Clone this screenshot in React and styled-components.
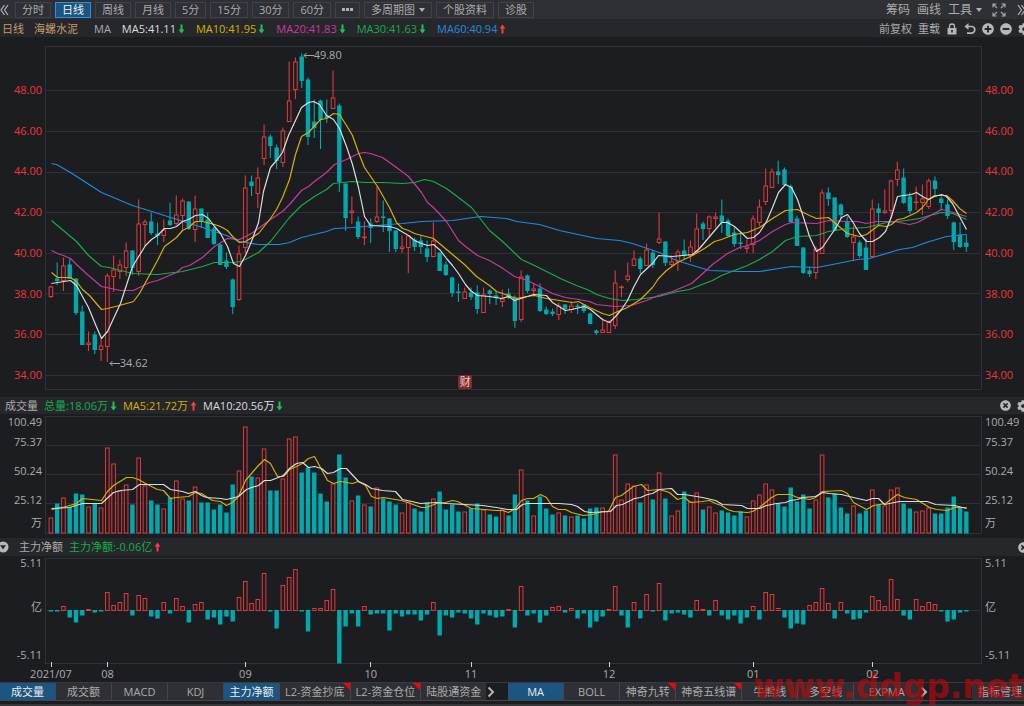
import React, { useState } from 'react';
import styled, { createGlobalStyle } from 'styled-components';
import { FaCog, FaMinusCircle, FaPlusCircle, FaTimesCircle } from 'react-icons/fa';

const UP = '#e03a3a';
const DOWN = '#00a9ae';
const WHITE = '#dcdcdc';
const YELLOW = '#d9b000';
const MAGENTA = '#cc389f';
const GREEN = '#17ad4c';
const BLUE = '#208ae0';

const CHART_WIDTH = 937;
const STEP = 6.27;
const barX = (i) => 6.4 + i * STEP;

// direction, high, body top, body bottom, low
const CANDLES = `
U 240 241 251 252|D 217 233 235 239|U 212 220 235 245|D 213 219 233 233|D 233 233 267 269|D 260 266 299 299
U 286 297 299 305|D 286 289 304 308|U 293 300 304 315|U 228 230 301 316|U 210 224 231 246|U 214 219 226 233
U 197 205 222 230|D 205 205 222 229|U 154 178 226 230|U 174 176 179 200|D 167 176 187 189|D 177 188 190 199
U 174 184 190 196|D 157 175 179 180|U 150 169 178 179|U 153 155 170 184|D 156 156 183 184|U 150 163 184 196
D 163 163 175 182|D 167 174 192 192|D 181 183 198 199|D 198 199 219 219|D 207 215 221 223|D 233 234 261 268
U 200 208 254 255|U 130 142 202 207|D 130 136 140 150|U 122 132 148 162|U 79 91 113 119|D 89 91 100 112
D 99 102 115 123|U 82 85 117 121|U 16 55 76 76|U 12 16 44 53|D 8 11 35 42|D 32 34 91 99
D 54 76 82 92|D 54 55 74 103|D 54 70 72 77|U 25 52 63 63|D 58 60 136 146|D 138 138 172 185
U 151 165 167 178|D 171 176 191 193|U 176 191 192 199|D 173 178 182 197|U 141 171 176 177|D 155 171 172 186
D 173 173 185 206|D 185 185 203 206|U 190 201 203 207|U 190 190 202 227|D 192 194 201 205|D 190 195 201 208
D 195 203 211 216|U 177 195 211 211|D 207 207 225 225|D 216 219 229 230|D 231 232 247 251|D 238 246 247 256
U 242 246 253 253|D 242 247 251 254|D 240 247 263 268|U 242 249 267 267|D 244 245 248 258|D 246 250 252 259
U 244 253 256 261|D 243 248 252 253|D 250 252 275 282|U 225 231 274 276|D 229 230 245 247|U 238 243 245 250
D 238 243 265 266|D 261 264 268 269|D 263 266 268 270|U 257 260 269 274|D 259 259 263 268|U 256 260 264 267
D 258 260 261 268|D 259 259 265 267|D 267 268 278 278|D 284 285 287 289|U 273 284 287 287|U 275 276 287 287
U 225 237 280 283|U 240 241 242 251|U 217 230 234 236|U 205 213 220 220|D 211 213 223 227|U 198 204 220 220
D 205 207 219 222|U 167 193 197 198|D 196 196 217 220|U 210 216 219 221|U 204 206 216 225|D 194 205 210 213
U 195 201 210 216|U 168 183 206 207|D 176 178 183 194|U 170 171 183 192|U 167 171 173 181|D 154 170 176 187
D 173 175 190 191|D 182 187 198 201|D 188 197 198 203|U 194 201 203 207|U 170 173 199 207|U 154 161 177 180
U 123 140 156 159|U 123 126 142 142|D 115 126 129 138|D 122 124 139 140|D 139 141 176 177|D 170 173 200 200
D 202 202 227 228|D 221 225 228 231|U 201 203 227 233|U 144 147 208 208|D 142 147 153 160|D 152 152 184 185
D 158 159 169 173|D 171 176 191 192|U 180 191 197 215|D 195 197 210 212|D 193 202 224 224|U 154 163 211 211
D 158 163 167 180|U 144 165 167 168|U 134 135 165 173|U 116 124 134 140|D 123 132 157 158|D 147 151 165 168
U 141 156 157 164|U 139 153 157 169|U 133 135 161 163|D 131 135 143 149|D 151 153 157 164|D 154 159 170 173
D 176 177 196 204|D 177 189 201 202|D 189 197 201 206
`.trim().split(/[|\n]/).map((row) => {
    const [dir, high, top, bottom, low] = row.split(' ');
    return { up: dir === 'U', high: +high, top: +top, bottom: +bottom, low: +low };
});

const VOLUMES = [
    16, 30, 36, 26, 40, 39, 27, 30, 26, 86, 70, 43, 49, 29, 76, 48, 33, 29, 25, 36,
    53, 35, 33, 47, 31, 31, 24, 29, 21, 49, 63, 107, 57, 56, 85, 43, 43, 55, 95, 97,
    61, 66, 61, 40, 32, 50, 79, 56, 33, 38, 29, 27, 46, 35, 32, 29, 21, 32, 25, 22,
    31, 35, 42, 24, 29, 22, 22, 25, 30, 24, 19, 17, 24, 18, 39, 64, 33, 18, 37, 25,
    19, 21, 18, 17, 18, 15, 25, 26, 26, 23, 79, 34, 50, 48, 31, 49, 34, 61, 35, 18,
    23, 42, 32, 41, 24, 27, 21, 23, 21, 18, 22, 17, 33, 39, 50, 44, 30, 27, 46, 32,
    39, 25, 34, 79, 36, 40, 26, 20, 28, 20, 23, 44, 29, 28, 44, 46, 30, 25, 22, 23,
    26, 20, 20, 26, 37, 26, 22
];

const NET_FLOW = [
    -1, -1, 4, -7, -12, -5, 1, -2, -1, 18, 5, 8, 17, -5, 15, 12, -6, -8, 8, -3,
    12, 4, -12, 6, 8, -9, -7, -14, -6, -11, 13, 29, 7, 11, 37, -1, -18, 25, 33, 41,
    -1, -21, 2, 2, 10, 21, -53, -16, -3, -16, 4, -4, -3, -3, -20, -3, -6, -4, -4, -10,
    -4, 8, -25, -5, -7, -2, -3, -8, -14, -3, -5, -7, -6, 1, -17, 24, -5, -3, -12, -5,
    3, 4, -2, 2, -8, -3, -17, -11, -6, 1, 24, -5, -17, 8, -8, 16, -1, 27, -10, -3,
    -2, -4, -7, 10, 1, -5, 10, -5, -9, -5, -13, -7, 4, -9, 18, 16, 2, -7, -18, -13,
    -14, 5, 8, 22, 7, -8, 8, -3, -9, -8, -2, 14, 10, 4, 31, 11, -5, -9, 11, 4,
    8, 6, -1, -11, -9, -2, -1
];

const PRICE_LINES = [
    { color: BLUE, points: '7,118 12,119 26,127 57,147 88,160 120,170 155,181 182,190 195,196 214,199 235,199 245,197 257,192 282,186 290,183 308,182 345,179 358,178 377,176 408,175 415,174 436,171 462,173 472,176 495,179 515,185 552,193 575,195 588,198 615,207 632,215 655,222 665,225 695,226 715,226 747,221 772,222 788,219 813,214 825,213 855,204 868,202 885,196 902,191 922,189' },
    { color: GREEN, points: '7,175 32,196 44,210 57,221 65,222 76,225 89,228 113,229 138,226 158,221 170,217 189,217 197,216 214,207 226,196 245,172 257,160 270,151 282,144 289,138 308,136 320,137 338,137 358,138 370,137 380,134 389,136 402,143 414,152 427,162 445,185 457,195 477,214 490,220 502,226 518,234 532,240 545,245 552,249 565,253 578,255 592,254 614,251 633,246 645,244 655,240 668,235 677,230 690,225 703,220 715,214 728,206 741,195 753,191 772,190 784,186 803,183 822,182 842,177 862,175 875,173 885,170 897,167 908,168 922,174' },
    { color: MAGENTA, points: '7,205 13,208 19,210 26,213 32,219 44,230 57,241 76,245 89,245 95,242 105,237 113,235 132,227 138,222 145,220 158,212 170,201 183,193 195,194 207,188 218,180 226,174 238,166 245,159 257,145 264,141 270,136 282,127 290,119 302,114 308,111 314,108 320,107 326,108 338,112 352,122 364,131 377,147 383,157 389,162 402,176 414,195 421,201 433,210 445,215 457,222 470,231 483,235 495,241 508,248 521,252 534,254 545,256 552,259 571,261 587,260 602,255 614,250 628,246 647,238 655,231 668,219 683,208 695,202 703,200 715,195 728,186 741,179 747,177 772,178 784,175 803,176 813,176 822,178 832,176 850,176 865,179 873,177 884,171 897,164 902,165 922,171' },
    { color: YELLOW, points: '7,227 13,232 26,232 32,236 38,244 45,250 57,264 63,263 75,260 89,256 95,248 101,237 113,215 120,201 132,192 138,185 144,182 151,176 158,176 170,179 176,181 183,185 189,192 195,197 201,196 214,188 226,173 232,164 238,152 245,134 251,109 257,91 264,87 276,74 282,73 289,68 295,69 302,80 308,90 314,107 320,122 333,141 345,162 352,177 358,183 364,185 370,188 389,193 408,209 420,219 432,231 445,240 452,246 464,250 472,253 482,251 490,250 502,253 515,255 528,257 534,256 545,262 558,268 565,270 571,267 583,262 596,254 608,242 614,233 622,225 633,217 648,210 660,203 670,196 677,194 690,189 703,187 715,182 728,173 741,165 753,164 765,170 772,173 784,172 791,178 803,188 815,191 822,189 834,180 842,181 847,179 853,174 859,173 872,167 878,162 884,154 890,150 902,150 908,155 915,163 922,168' },
    { color: WHITE, points: '7,238 13,237 26,235 32,240 44,262 51,279 57,293 63,286 76,258 88,221 101,200 107,194 113,190 120,183 126,183 132,181 138,176 144,174 151,170 158,169 164,173 170,181 176,188 183,201 189,218 195,221 201,210 207,196 214,177 219,146 226,122 232,115 238,107 244,90 257,62 264,57 269,56 275,59 282,70 289,74 295,83 302,101 308,119 314,142 320,171 326,180 345,181 352,183 364,190 370,195 377,198 383,200 389,199 396,205 402,213 408,220 414,228 421,239 426,245 433,250 445,251 457,253 464,251 470,255 483,251 489,249 502,250 508,257 521,265 527,264 540,261 546,264 558,274 565,277 571,271 577,264 583,255 589,242 596,229 608,218 614,210 628,211 648,209 655,203 677,177 683,177 690,181 703,193 709,192 715,187 722,176 728,162 734,147 741,139 747,142 753,154 759,172 765,191 772,206 778,202 784,193 791,183 797,172 803,169 808,176 815,188 822,196 828,196 835,192 841,186 847,171 853,151 859,150 867,149 872,147 878,151 884,154 890,151 897,149 902,151 908,158 915,171 922,184' }
];

const VOLUME_LINES = [
    { color: YELLOW, points: '7,94 18,92 32,88 38,83 57,85 63,76 69,70 82,62 88,62 94,64 101,68 107,71 113,74 119,75 126,83 132,82 144,81 151,77 157,78 168,85 176,86 182,90 188,87 194,81 201,65 213,51 220,44 226,48 233,61 239,61 245,54 252,51 258,48 264,43 270,41 283,65 289,68 296,66 308,68 314,66 321,70 327,81 333,83 339,82 357,85 363,87 377,92 382,92 392,88 401,87 408,85 413,86 427,93 452,95 458,95 464,97 471,93 477,85 483,83 489,83 496,79 502,82 508,91 514,94 521,94 527,97 539,100 548,99 558,96 564,96 571,82 577,80 589,71 597,69 603,75 615,74 625,77 633,84 640,82 646,87 658,86 665,85 671,88 677,90 683,94 689,96 703,97 708,96 715,92 727,82 733,79 746,79 753,82 765,84 771,82 778,76 797,75 803,78 809,87 822,94 829,90 841,88 853,79 860,82 872,84 885,92 892,94 903,95 910,92 922,92' },
    { color: WHITE, points: '7,93 25,92 38,88 57,88 69,77 76,75 88,74 95,69 102,69 119,69 126,74 138,76 144,78 151,76 157,80 162,82 176,83 182,84 194,81 202,74 207,72 214,70 220,65 226,65 239,60 245,53 252,48 258,47 264,52 270,51 277,53 283,58 289,57 296,53 302,53 314,66 321,69 327,73 338,75 351,76 358,84 363,85 376,88 392,87 402,88 438,90 452,92 463,94 472,94 478,89 483,88 515,88 527,89 533,91 540,96 546,97 566,96 572,90 578,89 590,83 596,82 603,79 608,78 615,74 627,73 633,79 640,79 646,80 658,82 671,85 678,89 697,90 703,93 715,93 722,90 732,88 741,87 746,85 753,84 758,82 771,81 778,77 785,78 797,79 809,82 822,85 828,83 834,83 840,89 855,86 883,86 891,89 910,90 922,93' }
];

const PERIODS = ['分时', '日线', '周线', '月线', '5分', '15分', '30分', '60分'];
const PRICES = ['48.00', '46.00', '44.00', '42.00', '40.00', '38.00', '36.00', '34.00'];
const VOLUME_TICKS = ['100.49', '75.37', '50.24', '25.12', '万'];
const FLOW_TICKS = ['5.11', '亿', '-5.11'];

const AVERAGES = [
    { text: 'MA5:41.11', color: WHITE },
    { text: 'MA10:41.95', color: YELLOW },
    { text: 'MA20:41.83', color: MAGENTA },
    { text: 'MA30:41.63', color: GREEN },
    { text: 'MA60:40.94', color: BLUE, up: true }
];

// days = trading days until the next month label
const MONTHS = [
    { label: '2021/07', days: 9 },
    { label: '08', days: 22 },
    { label: '09', days: 20 },
    { label: '10', days: 16 },
    { label: '11', days: 22 },
    { label: '12', days: 23 },
    { label: '01', days: 19 },
    { label: '02', days: 17 }
];

const SUB_TABS = [
    { label: '成交量', active: true },
    { label: '成交额' },
    { label: 'MACD' },
    { label: 'KDJ' },
    { label: '主力净额', active: true },
    { label: 'L2-资金抄底', flag: true },
    { label: 'L2-资金仓位', flag: true },
    { label: '陆股通资金' }
];

const MAIN_TABS = [
    { label: 'MA', active: true },
    { label: 'BOLL' },
    { label: '神奇九转', flag: true },
    { label: '神奇五线谱', flag: true },
    { label: '牛熊线' },
    { label: '多空线' },
    { label: 'EXPMA', wide: true }
];

const TrendArrow = ({ up }) => (
    <svg width="7" height="10" viewBox="0 0 7 10" fill={up ? '#ff3b3b' : '#19c653'}>
        <path d={up ? 'M3.5 0.5 6.5 4.5H4.5V9.5H2.5V4.5H0.5z' : 'M3.5 9.5 0.5 5.5h2v-5h2v5h2z'} />
    </svg>
);

const Chevron = ({ left, double }) => (
    <svg width="10" height="12" viewBox="0 0 10 12" fill="none" stroke="#b4b4b4" strokeWidth={double ? 1.2 : 2}>
        {double && <path d={left ? 'M4.5 1 1 6l3.5 5M8 1 4.5 6 8 11' : 'M2 1l3.5 5L2 11M5.5 1 9 6l-3.5 5'} />}
        {!double && <path d="M2.5 1.5 7 6l-4.5 4.5" />}
    </svg>
);

const LockIcon = () => (
    <svg width="12" height="12" viewBox="0 0 12 12">
        <path d="M3.5 6V3.500a2.500 2.500 0 0 1 5 0V5" fill="none" stroke="#b4b4b4" strokeWidth="1.300" />
        <path fillRule="evenodd" fill="#b4b4b4" d="M1.500 5h9v6.500h-9zM5.200 7v2.500h1.600V7z" />
    </svg>
);

const UndoIcon = () => (
    <svg width="12" height="12" viewBox="0 0 12 12">
        <path d="M3 3.500h4.500a3.300 3.300 0 0 1 0 6.600H3" fill="none" stroke="#b4b4b4" strokeWidth="1.700" />
        <path d="M4.500 0v7L0.500 3.500z" fill="#b4b4b4" />
    </svg>
);

const ExpandIcon = () => (
    <svg width="14" height="14" viewBox="0 0 14 14" fill="none" stroke="#a8a8a8" strokeWidth="1.100">
        <path d="M1 4.500V1h3.500M1 1l4 4M9.500 1H13v3.500M13 1 9 5M1 9.500V13h3.500M1 13l4-4M9.500 13H13V9.500M13 13 9 9" />
    </svg>
);

const CollapseIcon = () => (
    <svg width="12" height="12" viewBox="0 0 12 12">
        <circle cx="6" cy="6" r="5.500" fill="#b8b8b8" />
        <path d="M3 4.200h6L6 8.500z" fill="#26272b" />
    </svg>
);

const NoteArrow = () => (
    <svg width="11" height="8" viewBox="0 0 11 8" fill="none" stroke="#a6a6a6">
        <path d="M11 4.500H1M3.500 2 1 4.500 3.500 7" />
    </svg>
);

const Bar = ({ index, y, height, up }) => {
    const x = barX(index);
    if (up) {
        return (
            <rect x={x - 1.8} y={y + 0.5} width="3.6" height={Math.max(height - 1, 0.6)} fill="#1c1d21" stroke={UP} />
        );
    }
    return <rect x={x - 2.2} y={y} width="4.4" height={height} fill={DOWN} />;
};

const Grid = ({ rows }) => rows.map((y) => (
    <line key={y} x1="0" x2={CHART_WIDTH - 2} y1={y + 0.5} y2={y + 0.5} stroke="#2f3034" />
));

const Lines = ({ lines }) => lines.map((line) => (
    <polyline
        key={line.color}
        points={line.points}
        fill="none"
        stroke={line.color}
        strokeWidth="1.2"
        strokeLinejoin="round"
    />
));

const PriceChart = () => (
    <Plot viewBox={`0 0 ${CHART_WIDTH} 344`} preserveAspectRatio="none" $height={344}>
        <Grid rows={[44, 85, 126, 166, 207, 247, 288, 329]} />
        <g transform="translate(-0.5 -0.5)">
            {CANDLES.map((candle, i) => (
                <g key={i}>
                    <line
                        x1={barX(i)}
                        x2={barX(i)}
                        y1={candle.high}
                        y2={candle.low + 0.5}
                        stroke={candle.up ? UP : DOWN}
                        strokeWidth="1.1"
                    />
                    <Bar index={i} y={candle.top} height={candle.bottom - candle.top + 0.5} up={candle.up} />
                </g>
            ))}
            <Lines lines={PRICE_LINES} />
        </g>
    </Plot>
);

const VolumeChart = () => (
    <Plot viewBox={`0 0 ${CHART_WIDTH} 118`} preserveAspectRatio="none" $height={118}>
        <Grid rows={[29, 58, 87]} />
        <g transform="translate(-0.5 -0.5)">
            {VOLUMES.map((height, i) => (
                <Bar key={i} index={i} y={118 - height} height={height} up={CANDLES[i].up} />
            ))}
            <Lines lines={VOLUME_LINES} />
        </g>
    </Plot>
);

const FlowChart = () => (
    <Plot viewBox={`0 0 ${CHART_WIDTH} 106`} preserveAspectRatio="none" $height={106}>
        <Grid rows={[52]} />
        <g transform="translate(-0.5 0)">
            {NET_FLOW.map((value, i) => (
                <Bar
                    key={i}
                    index={i}
                    y={value > 0 ? 52 - value : 52}
                    height={Math.abs(value) + (value > 0 ? 1 : 0.5)}
                    up={value > 0}
                />
            ))}
        </g>
    </Plot>
);

const TabGroup = ({ tabs }) => {
    const [items, setItems] = useState(tabs);
    const toggle = (label) => {
        setItems(items.map((item) => (item.label === label ? { ...item, active: !item.active } : item)));
    };

    return (
        <Tabs>
            {items.map((item) => (
                <Tab key={item.label} $active={item.active} $wide={item.wide} onClick={() => toggle(item.label)}>
                    {item.label}
                    {item.flag && <Flag />}
                </Tab>
            ))}
        </Tabs>
    );
};

const App = () => {
    const [period, setPeriod] = useState('日线');

    return (
        <Page>
            <GlobalStyle />
            <TopBar>
                <IconButton aria-label="收起"><Chevron left double /></IconButton>
                <Periods>
                    {PERIODS.map((name) => (
                        <PeriodButton key={name} $active={name === period} onClick={() => setPeriod(name)}>
                            {name}
                        </PeriodButton>
                    ))}
                    <PeriodButton aria-label="更多周期"><Dots><i /><i /><i /></Dots></PeriodButton>
                    <PeriodButton>多周期图<Caret /></PeriodButton>
                    <PeriodButton>个股资料</PeriodButton>
                    <PeriodButton>诊股</PeriodButton>
                </Periods>
                <Tools>
                    <ToolButton>筹码</ToolButton>
                    <ToolButton>画线</ToolButton>
                    <ToolButton>工具<Caret /></ToolButton>
                    <IconButton aria-label="全屏"><ExpandIcon /></IconButton>
                    <IconButton aria-label="展开"><Chevron double /></IconButton>
                </Tools>
            </TopBar>

            <InfoBar>
                <StockName>
                    <span>日线</span>
                    <span>海螺水泥</span>
                </StockName>
                <Legend>
                    <span>MA</span>
                    {AVERAGES.map((item) => (
                        <Value key={item.text} $color={item.color}>
                            {item.text}
                            <TrendArrow up={item.up} />
                        </Value>
                    ))}
                </Legend>
                <ChartActions>
                    <TextButton>前复权</TextButton>
                    <TextButton>重载</TextButton>
                    <IconButton aria-label="锁定"><LockIcon /></IconButton>
                    <IconButton aria-label="撤销"><UndoIcon /></IconButton>
                    <IconButton aria-label="放大"><FaPlusCircle size={12} /></IconButton>
                    <IconButton aria-label="缩小"><FaMinusCircle size={12} /></IconButton>
                    <IconButton aria-label="设置"><FaCog size={12} /></IconButton>
                </ChartActions>
            </InfoBar>

            <PricePanel>
                <PriceAxis $left>{PRICES.map((p) => <span key={p}>{p}</span>)}</PriceAxis>
                <PlotArea>
                    <PriceChart />
                    <Note $index={40} $top={1}>
                        <NoteArrow />49.80
                    </Note>
                    <Note $index={9} $top={309}>
                        <NoteArrow />34.62
                    </Note>
                    <ReportBadge $index={66}>财</ReportBadge>
                </PlotArea>
                <PriceAxis>{PRICES.map((p) => <span key={p}>{p}</span>)}</PriceAxis>
            </PricePanel>

            <PanelHeader>
                <HeaderLegend>
                    <span>成交量</span>
                    <Value $color={GREEN}>总量:18.06万<TrendArrow /></Value>
                    <Value $color={YELLOW}>MA5:21.72万<TrendArrow up /></Value>
                    <Value $color={WHITE}>MA10:20.56万<TrendArrow /></Value>
                </HeaderLegend>
                <HeaderActions>
                    <IconButton aria-label="关闭成交量"><FaTimesCircle size={11} /></IconButton>
                    <IconButton aria-label="设置成交量"><FaCog size={12} /></IconButton>
                </HeaderActions>
            </PanelHeader>
            <Panel>
                <VolumeAxis $left>{VOLUME_TICKS.map((t) => <span key={t}>{t}</span>)}</VolumeAxis>
                <PlotArea><VolumeChart /></PlotArea>
                <VolumeAxis>{VOLUME_TICKS.map((t) => <span key={t}>{t}</span>)}</VolumeAxis>
            </Panel>

            <PanelHeader>
                <FlowLegend>
                    <IconButton aria-label="切换指标"><CollapseIcon /></IconButton>
                    <span>主力净额</span>
                    <Value $color={GREEN}>主力净额:-0.06亿<TrendArrow up /></Value>
                </FlowLegend>
                <HeaderActions>
                    <IconButton aria-label="关闭主力净额"><FaTimesCircle size={11} /></IconButton>
                </HeaderActions>
            </PanelHeader>
            <Panel>
                <FlowAxis $left>{FLOW_TICKS.map((t) => <span key={t}>{t}</span>)}</FlowAxis>
                <PlotArea><FlowChart /></PlotArea>
                <FlowAxis>{FLOW_TICKS.map((t) => <span key={t}>{t}</span>)}</FlowAxis>
            </Panel>

            <DateAxis>
                {MONTHS.map((month) => (
                    <Month key={month.label} $days={month.days}>
                        <MonthLabel>{month.label}</MonthLabel>
                    </Month>
                ))}
            </DateAxis>

            <TabBar>
                <TabGroup tabs={SUB_TABS} />
                <NextButton aria-label="下一组"><Chevron /></NextButton>
                <TabGroup tabs={MAIN_TABS} />
                <NextButton aria-label="下一组指标"><Chevron /></NextButton>
                <ManageButton>指标管理</ManageButton>
            </TabBar>
            <Footer />
            <Watermark>www.ddgp.net</Watermark>
        </Page>
    );
};

// Styled Components
const GlobalStyle = createGlobalStyle`
  * {
    box-sizing: border-box;
  }

  body {
    margin: 0;
    background: #1c1d21;
    color: #ababab;
    font-family: "Open Sans", "Noto Sans CJK SC", sans-serif;
    font-size: 11px;
    line-height: 14px;
  }

  button {
    margin: 0;
    padding: 0;
    border: none;
    background: none;
    color: inherit;
    font: inherit;
    white-space: nowrap;
    cursor: pointer;
  }

  svg {
    display: block;
    flex-shrink: 0;
  }
`;

const Page = styled.div`
  position: relative;
  overflow: hidden;
  background: #1c1d21;
`;

const TopBar = styled.div`
  display: flex;
  align-items: center;
  height: 19px;
  background: #2f3035;
`;

const IconButton = styled.button`
  display: flex;
  align-items: center;
  justify-content: center;
  color: #b8b8b8;
`;

const Periods = styled.div`
  display: flex;
  gap: 4px;
  margin-left: 5px;
`;

const PeriodButton = styled.button`
  display: flex;
  align-items: center;
  gap: 4px;
  height: 16px;
  padding: 0 6px;
  border: 1px solid ${(props) => (props.$active ? '#2a8fe0' : '#414247')};
  background: ${(props) => (props.$active ? '#1b5580' : 'transparent')};
  color: ${(props) => (props.$active ? '#f0f0f0' : '#ababab')};
`;

const Dots = styled.span`
  display: flex;
  gap: 1px;

  i {
    width: 3px;
    height: 3px;
    background: #b0b0b0;
  }
`;

const Caret = styled.span`
  border: 3px solid transparent;
  border-top: 4px solid #b0b0b0;
  border-bottom: none;
`;

const Tools = styled.div`
  display: flex;
  align-items: center;
  gap: 10px;
  margin-left: auto;
  margin-right: -2px;
`;

const ToolButton = styled.button`
  display: flex;
  align-items: center;
  gap: 4px;
  font-size: 12px;

  & + & {
    margin-left: -3px;
  }
`;

const InfoBar = styled.div`
  display: flex;
  align-items: center;
  height: 18px;
  padding: 1px 0 0 2px;
  background: #26272b;
`;

const StockName = styled.div`
  display: flex;
  gap: 10px;
  color: #c99a68;
`;

const Legend = styled.div`
  display: flex;
  gap: 11px;
  margin-left: 16px;
`;

const Value = styled.span`
  display: flex;
  align-items: center;
  gap: 2px;
  color: ${(props) => props.$color};
  white-space: nowrap;
`;

const ChartActions = styled.div`
  display: flex;
  gap: 6px;
  margin-left: auto;
  margin-right: -6px;
`;

const TextButton = styled.button`
  color: #ababab;
`;

const Panel = styled.div`
  display: grid;
  grid-template-columns: 45px minmax(0, 1fr) 42px;
  padding-top: 2px;
`;

const PricePanel = styled(Panel)`
  padding: 9px 0 7px;
`;

const Axis = styled.div`
  text-align: ${(props) => (props.$left ? 'right' : 'left')};
  padding: ${(props) => (props.$left ? '0 3px 0 0' : '0 0 0 3px')};
`;

const PriceAxis = styled(Axis)`
  display: flex;
  flex-direction: column;
  justify-content: space-between;
  padding-top: 37px;
  padding-bottom: 8px;
  color: #ee3636;
`;

const VolumeAxis = styled(Axis)`
  display: grid;
  grid-template-rows: 11px repeat(3, 29px) 18px;
  align-items: center;
`;

const FlowAxis = styled(Axis)`
  display: grid;
  grid-template-rows: 10px 1fr 18px;
  align-items: center;
`;

const PlotArea = styled.div`
  position: relative;
  border: 1px solid #303135;
`;

const Plot = styled.svg`
  width: calc(100% + 2px);
  height: ${(props) => props.$height}px;
  margin: -1px;
`;

const Note = styled.span`
  position: absolute;
  top: ${(props) => props.$top}px;
  left: ${(props) => (barX(props.$index) / CHART_WIDTH) * 100}%;
  display: flex;
  align-items: center;
`;

const ReportBadge = styled.span`
  position: absolute;
  bottom: 0;
  left: ${(props) => (barX(props.$index) / CHART_WIDTH) * 100}%;
  width: 14px;
  height: 14px;
  margin-left: -7px;
  border-radius: 2px;
  background: #842a2a;
  color: #e6d6d6;
  text-align: center;
`;

const PanelHeader = styled.div`
  display: flex;
  align-items: center;
  height: 18px;
  background: #26272b;

  ${Panel} + & {
    margin-top: 4px;
  }

  ${PricePanel} + & {
    height: 17px;
    margin-top: 0;
  }
`;

const HeaderLegend = styled.div`
  display: flex;
  gap: 6px;
  padding-left: 5px;
`;

const FlowLegend = styled.div`
  display: flex;
  gap: 6px;
  margin-left: -3px;

  button {
    margin-right: 4px;
  }
`;

const HeaderActions = styled.div`
  display: flex;
  gap: 6px;
  margin-left: auto;
  margin-right: -5px;
`;

const DateAxis = styled.div`
  display: flex;
  height: 20px;
  margin: -2px 42px 0 45px;
  padding: 0 3px 0 6px;
`;

const Month = styled.div`
  display: flex;
  flex: ${(props) => props.$days} 0 0;
`;

const MonthLabel = styled.span`
  display: flex;
  flex-direction: column;
  align-items: center;
  width: 0;
  white-space: nowrap;
  z-index: 1;

  &::before {
    content: '';
    width: 1px;
    height: 5px;
    background: #d0d0d0;
  }
`;

const TabBar = styled.div`
  display: flex;
  height: 18px;
  border-top: 1px solid #38393d;
`;

const Tabs = styled.div`
  display: flex;
  gap: 1px;
  background: #45464a;
`;

const Tab = styled.button`
  position: relative;
  min-width: ${(props) => (props.$wide ? 65 : 55)}px;
  padding: 0 5px;
  background: ${(props) => (props.$active ? '#1b5580' : '#2f3035')};
  color: ${(props) => (props.$active ? '#ececec' : '#ababab')};
`;

const Flag = styled.span`
  position: absolute;
  top: 0;
  right: 0;
  border-top: 7px solid #ff0000;
  border-left: 7px solid transparent;
`;

const NextButton = styled.button`
  display: flex;
  align-items: center;
  width: 22px;
`;

const ManageButton = styled.button`
  margin-left: auto;
  padding: 0 2px 0 6px;
  background: #2f3035;
`;

const Footer = styled.div`
  height: 6px;
  border-top: 1px solid #45464a;
  border-bottom: 2px solid #35363a;
`;

const Watermark = styled.div`
  position: absolute;
  right: 0;
  bottom: 0;
  color: rgba(190, 8, 12, 0.65);
  font-family: "DejaVu Sans", sans-serif;
  font-size: 33px;
  font-weight: bold;
  line-height: 38px;
  pointer-events: none;
`;

export default App;
